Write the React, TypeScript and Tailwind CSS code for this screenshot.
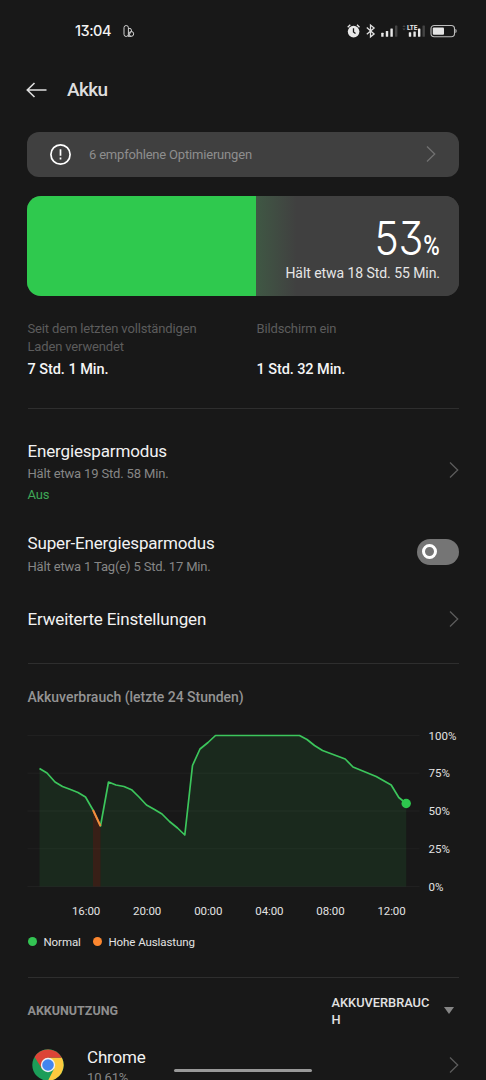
import { useState } from 'react';

const POINTS: [number, number][] = [
  [13, 33.5], [20.5, 38], [28.5, 47], [36, 51.5], [44, 54.5], [51.5, 57.5], [59, 62], [66.5, 75],
  [74, 91], [82, 47], [89.5, 50], [97.5, 51.5], [105, 54.7], [112.5, 62], [120, 70], [128, 74.5],
  [135.5, 79], [143, 86.5], [151, 93], [158.3, 100], [166, 30.5], [173.5, 14], [181.5, 7.5], [189, 0.5],
  [273, 0.5], [280.5, 4.5], [288, 10.5], [296, 15.5], [318.7, 24], [326.5, 32], [349.7, 41.5],
  [364.7, 50], [372.3, 62.5], [379.7, 68.5],
];

const HOURS = ['16:00', '20:00', '00:00', '04:00', '08:00', '12:00'];
const LEVELS = ['100%', '75%', '50%', '25%', '0%'];

const toPath = (pts: [number, number][]) => 'M' + pts.map((p) => p.join(' ')).join('L');

function Chevron({ color = '#5c5c5c' }: { color?: string }) {
  return (
    <svg width="10" height="18" viewBox="0 0 10 18" fill="none" stroke={color} strokeWidth="1.3" className="shrink-0">
      <path d="M1 1.5L8.7 9L1 16.5" />
    </svg>
  );
}

function StatusBar() {
  return (
    <div className="flex h-[62px] items-center pl-[75px] pr-[29px]">
      <span className="w-[48px] font-['Inter'] text-[14.5px] font-medium tracking-[-0.5px] text-[#f2f2f2] [font-feature-settings:'cv09']">13:04</span>
      <svg width="12" height="14" viewBox="0 0 12 14" fill="none" stroke="#d0d0d0" strokeWidth="1">
        <rect x="1" y="1.5" width="4.4" height="11" rx="2.2" />
        <path d="M5.4 4.2Q9 3.8 8.6 7.3L5.2 11.8" />
        <circle cx="8.3" cy="9.9" r="2.4" />
        <path d="M5 12.3H8.3" />
      </svg>
      <svg width="111" height="16" viewBox="0 0 111 16" className="ml-auto overflow-visible">
        {/* alarm */}
        <circle cx="7.6" cy="8.6" r="5.8" fill="#e8e8e8" />
        <path d="M1.7 4.2L4.3 1.8M11 1.8L13.5 4.2" stroke="#e8e8e8" strokeWidth="1.3" />
        <path d="M7.5 5.2V9L9.5 10.5" stroke="#181818" strokeWidth="1.3" fill="none" />
        {/* bluetooth */}
        <path d="M20.8 4.6L28.1 10.9L24.5 13.8V2L28.1 4.9L20.8 11.2" stroke="#e0e0e0" strokeWidth="1.3" fill="none" />
        {/* signal */}
        <g fill="#e8e8e8">
          <rect x="35.2" y="9.8" width="2.4" height="4" rx=".5" />
          <rect x="39.8" y="8" width="2.4" height="5.8" rx=".5" />
          <rect x="44.4" y="5.5" width="2.4" height="8.3" rx=".5" />
          <rect x="62.8" y="9.3" width="2.4" height="4.5" rx=".5" />
          <rect x="67.4" y="8.5" width="2.4" height="5.3" rx=".5" />
          <rect x="72" y="5.5" width="2.4" height="8.3" rx=".5" />
        </g>
        <rect x="49" y="2.5" width="2.4" height="11.3" rx=".5" fill="#444" />
        <rect x="76.5" y="2.5" width="2.4" height="11.3" rx=".5" fill="#444" />
        <path d="M56.3 4L58 2L59.7 4ZM56.3 5.5L58 7.5L59.7 5.5Z" fill="#444" />
        <text x="61" y="6.8" fill="#e8e8e8" fontFamily="Roboto" fontSize="6.8" fontWeight="700" textLength="10.5" lengthAdjust="spacingAndGlyphs">LTE</text>
        {/* battery */}
        <rect x="85" y="2.5" width="23.5" height="11.2" rx="3.2" fill="none" stroke="#bdbdbd" strokeWidth="1.1" />
        <rect x="86.8" y="4.4" width="11.2" height="7.4" rx="1" fill="#e4e4e4" />
        <path d="M109.7 6.2Q111.3 8 109.7 9.8Z" fill="#a5a5a5" stroke="#a5a5a5" strokeWidth=".6" />
      </svg>
    </div>
  );
}

function UsageChart() {
  const normalFill = [
    toPath([...POINTS.slice(0, 8), [66.5, 151.5], [13, 151.5]]) + 'Z',
    toPath([...POINTS.slice(8), [379.7, 151.5], [74, 151.5]]) + 'Z',
  ].join('');

  return (
    <div>
      <div className="flex justify-between">
        <svg width="394" height="152" viewBox="0.5 0 394 152" fill="none" className="-ml-[0.5px] overflow-visible">
          <path d="M1 .5H393M1 38.2H393M1 76H393M1 113.8H393M1 151.5H393" stroke="#202020" />
          <path d={normalFill} fill="#2dc84d" fillOpacity=".1" />
          <path d={toPath([...POINTS.slice(7, 9), [74, 151.5], [66.5, 151.5]]) + 'Z'} fill="#ff4b14" fillOpacity=".14" />
          <path d={toPath(POINTS)} stroke="#3cc65c" strokeWidth="1.7" strokeLinejoin="round" />
          <path d={toPath(POINTS.slice(7, 9))} stroke="#f5893c" strokeWidth="2" />
          <circle cx="379.7" cy="68.5" r="4.7" fill="#2dc84d" />
        </svg>
        <div className="-mt-[7px] flex h-[167px] w-[30px] flex-col justify-between text-[11.5px] leading-[16px] text-[#e2e2e2]">
          {LEVELS.map((l) => <span key={l}>{l}</span>)}
        </div>
      </div>
      <div className="ml-[28px] mt-[8px] grid w-[366.6px] grid-cols-6 text-center text-[11.5px] leading-[16px] tracking-[-0.1px] text-[#e2e2e2]">
        {HOURS.map((h) => <span key={h}>{h}</span>)}
      </div>
      <div className="mt-[15px] flex items-center text-[11.5px] leading-[16px] tracking-[-0.08px] text-[#e2e2e2]">
        <span className="size-[9.5px] rounded-full bg-[#33c453]" />
        <span className="ml-[6.5px] w-[49px]">Normal</span>
        <span className="size-[9.5px] rounded-full bg-[#fb862f]" />
        <span className="ml-[6.5px]">Hohe Auslastung</span>
      </div>
    </div>
  );
}

function ChromeLogo() {
  return (
    <svg width="32" height="32" viewBox="-16 -16 32 32" className="shrink-0">
      <circle r="15.7" fill="#1c9d58" />
      <path d="M0-7.2H13.9A15.7 15.7 0 0 1 0 15.7L6.2 3.6Z" fill="#fcca3f" />
      <path d="M-13.4-8.1A15.7 15.7 0 0 1 13.9-7.2H0L-6.2 3.6Z" fill="#dc4437" />
      <circle r="7.2" fill="#f1f1f1" />
      <circle r="5.8" fill="#4285f0" />
    </svg>
  );
}

export default function App() {
  const [superSaver, setSuperSaver] = useState(false);

  return (
    <div className="relative h-[1080px] w-[486px] overflow-hidden whitespace-nowrap bg-[#181818] font-['Roboto',sans-serif] text-[#f2f2f2]">
      <StatusBar />

      <header className="flex h-[56px] items-center pl-[26px]">
        <svg width="21" height="16" viewBox="0 0 21 16" fill="none" stroke="#dedede" strokeWidth="1.6">
          <path d="M20.5 8H1.5M8.5 1L1.3 8L8.5 15" />
        </svg>
        <h1 className="ml-[20px] pt-[1px] text-[19px] font-medium tracking-[-0.6px] text-[#dedede]">Akku</h1>
      </header>

      <main className="px-[27.5px] pt-[13.5px]">
        {/* Suggestions */}
        <div className="-ml-[0.5px] flex h-[45.5px] items-center rounded-[12px] bg-[#404040] pl-[23px] pr-[22.5px]">
          <svg width="21" height="21" viewBox="0 0 21 21" fill="none" stroke="#fff" strokeWidth="1.7">
            <circle cx="10.5" cy="10.5" r="9.6" />
            <path d="M10.5 5.2V11.8M10.5 13.6V15.4" />
          </svg>
          <span className="ml-[18px] pt-[1.5px] text-[13px] tracking-[-0.19px] text-[#8e8e8e]">6 empfohlene Optimierungen</span>
          <span className="ml-auto"><Chevron color="#717171" /></span>
        </div>

        {/* Charge level */}
        <div className="-ml-[0.5px] mt-[18.5px] flex h-[100px] overflow-hidden rounded-[14px] bg-[#404040]">
          <div className="w-[53%] bg-[#2fc94e]" />
          <div className="flex flex-1 flex-col items-end bg-linear-to-r from-[#3f5844] to-[#404040] to-20% pr-[18.5px] pt-[18px]">
            <div className="flex h-[48px] items-baseline leading-[48px] text-white">
              <span className="-mr-[3px] origin-right scale-x-[.88] font-['Inter'] text-[46.5px] font-light tracking-[-0.5px] [font-feature-settings:'cv09']">53</span>
              <span className="origin-right scale-x-[.8] text-[28px] font-medium">%</span>
            </div>
            <span className="text-[14px] leading-[22px] tracking-[-0.06px] text-[#e6e6e6]">Hält etwa 18 Std. 55 Min.</span>
          </div>
        </div>

        <div className="mt-[24.5px] flex h-[88.5px] border-b border-[#2e2e2e] text-[13px] leading-[17.7px] tracking-[-0.15px] text-[#5c5c5c]">
          <div className="w-[229px]">
            <p className="h-[38px]">Seit dem letzten vollständigen<br />Laden verwendet</p>
            <p className="text-[14.5px] font-medium leading-[24px] tracking-[-0.05px] text-[#f5f5f5]">7 Std. 1 Min.</p>
          </div>
          <div>
            <p className="h-[38px]">Bildschirm ein</p>
            <p className="text-[14.5px] font-medium leading-[24px] tracking-[-0.08px] text-[#f5f5f5]">1 Std. 32 Min.</p>
          </div>
        </div>

        {/* Power modes */}
        <div className="flex h-[255px] flex-col border-b border-[#2e2e2e] pt-[30px] tracking-[-0.16px]">
          <div className="flex h-[92px] items-start justify-between">
            <div>
              <p className="text-[17px] leading-[24px]">Energiesparmodus</p>
              <p className="text-[13px] leading-[22px] text-[#868686]">Hält etwa 19 Std. 58 Min.</p>
              <p className="text-[13px] leading-[20px] text-[#3fa857]">Aus</p>
            </div>
            <div className="pt-[22.5px]"><Chevron /></div>
          </div>
          <div className="flex h-[76px] items-start justify-between">
            <div>
              <p className="text-[17px] leading-[24px]">Super-Energiesparmodus</p>
              <p className="text-[13px] leading-[23px] text-[#868686]">Hält etwa 1 Tag(e) 5 Std. 17 Min.</p>
            </div>
            <button
              role="switch"
              aria-checked={superSaver}
              onClick={() => setSuperSaver(!superSaver)}
              className={`mt-[8.5px] flex h-[25.5px] w-[42px] items-center rounded-full px-[5px] ${superSaver ? 'justify-end bg-[#2fc94e]' : 'bg-[#757575]'}`}
            >
              <span className="size-[15px] rounded-full border-[3.5px] border-white" />
            </button>
          </div>
          <div className="flex h-[24px] items-center justify-between">
            <p className="text-[17px] leading-[24px]">Erweiterte Einstellungen</p>
            <Chevron />
          </div>
        </div>

        {/* Usage over the last day */}
        <section className="h-[314px] border-b border-[#2e2e2e] pt-[22px]">
          <h2 className="mb-[27px] text-[14px] font-medium leading-[22px] tracking-[-0.02px] text-[#949494]">Akkuverbrauch (letzte 24 Stunden)</h2>
          <UsageChart />
        </section>

        <div className="flex h-[67px] items-center">
          <h2 className="text-[12.5px] font-bold text-[#8e8e8e]">AKKUNUTZUNG</h2>
          <p className="ml-auto w-[99px] text-[12.8px] font-medium leading-[17.5px] text-[#e2e2e2]">AKKUVERBRAUC<br />H</p>
          <svg width="10" height="7" viewBox="0 0 10 7" className="mb-[1.5px] ml-[13.5px] mr-[4.5px]"><path d="M0 0H10L5 7Z" fill="#858585" /></svg>
        </div>

        <div className="flex items-start pl-[4.5px] tracking-[-0.16px]">
          <div className="pt-[4px]"><ChromeLogo /></div>
          <div className="ml-[23px]">
            <p className="text-[17px] leading-[24px]">Chrome</p>
            <p className="text-[13px] leading-[17px] text-[#868686]">10.61%</p>
          </div>
          <div className="ml-auto pt-[11px]"><Chevron /></div>
        </div>
      </main>

      {/* Gesture bar */}
      <div className="absolute left-[174px] top-[1068.5px] h-[3.5px] w-[138px] rounded-full bg-[#999]" />
    </div>
  );
}
